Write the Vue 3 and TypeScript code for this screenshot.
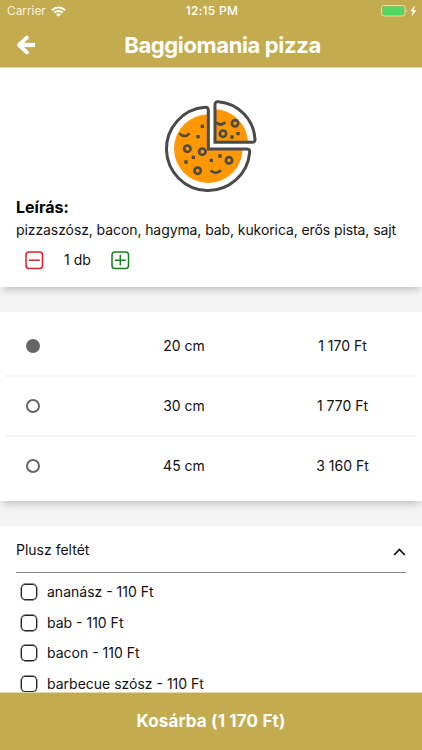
<script setup lang="ts">
import { computed, ref } from 'vue'

interface Size { label: string; price: string }

const sizes: Size[] = [
  { label: '20 cm', price: '1 170 Ft' },
  { label: '30 cm', price: '1 770 Ft' },
  { label: '45 cm', price: '3 160 Ft' },
]
const toppings = ['ananász - 110 Ft', 'bab - 110 Ft', 'bacon - 110 Ft', 'barbecue szósz - 110 Ft']
const selected = ref(0)
const quantity = ref(1)
const total = computed(() => {
  const value = Number(sizes[selected.value].price.replace(/\D/g, '')) * quantity.value
  return String(value).replace(/\B(?=(\d{3})+$)/g, ' ')
})
</script>

<template>
  <div class="screen">
    <header class="top">
      <div class="status">
        <div class="carrier">
          <span class="carrier-name">Carrier</span>
          <svg width="15" height="11" viewBox="0 0 15 11" fill="none" stroke="#fff" stroke-width="2.1">
            <path d="M1 4.2a9.2 9.2 0 0 1 13 0M3.3 6.8a5.9 5.9 0 0 1 8.4 0" />
            <path d="M7.5 10.8 5.1 8.5a3.4 3.4 0 0 1 4.8 0z" fill="#fff" stroke="none" />
          </svg>
        </div>
        <span class="time">12:15 PM</span>
        <div class="battery">
          <svg width="38" height="12" viewBox="0 0 38 12">
            <rect x=".5" y=".5" width="23.5" height="10.5" rx="2.4" fill="none" stroke="#e6d9a4" />
            <rect x="1.6" y="1.6" width="21.3" height="8.3" rx="1.2" fill="#4cd964" />
            <path d="M25.3 4v3.4c1.3-.5 1.3-2.9 0-3.4z" fill="#e6d9a4" />
            <path d="M33.8.6 29.3 6.3h2.5l-1.2 5 5-6.1h-2.8z" fill="#fff" />
          </svg>
        </div>
      </div>
      <div class="bar">
        <button class="back" aria-label="Vissza">
          <svg width="20" height="20" viewBox="0 0 20 20" fill="none" stroke="#fff" stroke-width="4.2" stroke-linejoin="round">
            <path d="M19 10H4" />
            <path d="M10.8 2.6 3.2 10l7.6 7.4" stroke-linecap="round" stroke-width="4" />
          </svg>
        </button>
        <h1>Baggiomania pizza</h1>
      </div>
    </header>

    <main class="content">
      <section class="card product">
        <svg class="pizza" width="112" height="110" viewBox="0 0 336 330" fill="none" stroke="#4b4a49" stroke-linecap="round">
          <g fill="#ff9800" stroke="none">
            <path d="M160 73A103 103 0 1 0 263 178H160z" />
            <path d="M180 58A102 102 0 0 1 279 157H180z" />
          </g>
          <g stroke-width="9">
            <path d="M160 61Q160 51 150 52A125 125 0 1 0 284 187Q285 177 275 177H160z" />
            <path d="M180 157V44Q180 34 190 35A120 120 0 0 1 300 147Q301 157 291 157z" />
          </g>
          <g stroke-width="8">
            <circle cx="97" cy="176" r="9.5" />
            <circle cx="142" cy="185" r="9.5" />
            <circle cx="128" cy="242" r="9.5" />
            <circle cx="222" cy="211" r="9.5" />
            <circle cx="204" cy="131" r="9.5" />
            <circle cx="240" cy="100" r="9.5" />
            <path stroke-linecap="butt" d="M73 130q16 16 31 0M167 241q15 15 31 0M182 97q15 13 29 0" />
          </g>
          <g fill="#4b4a49" stroke="none">
            <path d="M137 104h10v10h-10zM124 135h10v10h-10zM110 197h10v10h-10zM88 211h10v10H88zM164 206h10v10h-10zM190 193h10v10h-10zM226 136h10v10h-10zM244 126h10v10h-10z" />
          </g>
        </svg>
        <h2>Leírás:</h2>
        <p class="description">pizzaszósz, bacon, hagyma, bab, kukorica, erős pista, sajt</p>
        <div class="quantity">
          <button aria-label="Kevesebb" @click="quantity = Math.max(1, quantity - 1)">
            <svg width="19" height="19" viewBox="0 0 19 19" fill="none" stroke="#dc1f26" stroke-width="1.5">
              <rect x="1" y="1" width="16.5" height="16.5" rx="3" /><path d="M4 9.2h10.8" />
            </svg>
          </button>
          <span class="count">{{ quantity }} db</span>
          <button aria-label="Több" @click="quantity++">
            <svg width="19" height="19" viewBox="0 0 19 19" fill="none" stroke="#118518" stroke-width="1.5">
              <rect x="1" y="1" width="16.5" height="16.5" rx="3" /><path d="M4 9.2h10.8M9.3 3.8v10.8" />
            </svg>
          </button>
        </div>
      </section>

      <section class="card sizes">
        <div v-for="(size, i) in sizes" :key="size.label" class="size" @click="selected = i">
          <span class="radio" :class="{ on: selected === i }"></span>
          <span class="label">{{ size.label }}</span>
          <span class="price">{{ size.price }}</span>
        </div>
      </section>

      <section class="card extras">
        <div class="extras-head">
          <span>Plusz feltét</span>
          <svg width="14" height="10" viewBox="0 0 14 10" fill="none" stroke="#111" stroke-width="1.8">
            <path d="M2.2 8 7.5 2.5 12.8 8" />
          </svg>
        </div>
        <div v-for="topping in toppings" :key="topping" class="topping">
          <span class="check"></span>
          <span>{{ topping }}</span>
        </div>
      </section>
    </main>

    <button class="cart">Kosárba ({{ total }} Ft)</button>
  </div>
</template>

<style>
body { margin: 0; overflow: hidden; }
</style>

<style scoped>
.screen {
  width: 422px;
  height: 750px;
  display: flex;
  flex-direction: column;
  overflow: hidden;
  background: #f3f3f3;
  color: #111;
  font: 14px/20px Inter, "Liberation Sans", sans-serif;
}
button { border: 0; padding: 0; margin: 0; background: none; font: inherit; }
svg { display: block; flex: none; }
.top { flex: none; height: 68px; background: #c3ab50; color: #fff; border-bottom: 1px solid #e4d9b2; box-sizing: border-box; }
.status { display: grid; grid-template-columns: 1fr auto 1fr; height: 22px; align-items: center; font-size: 12px; line-height: 22px; }
.carrier { display: flex; align-items: center; gap: 5px; padding-left: 7px; letter-spacing: -.08px; color: #f7f2df; }
.time { font-weight: 500; letter-spacing: .25px; padding-left: 2px; }
.battery { display: flex; justify-content: flex-end; padding-right: 3px; }
.bar { display: grid; grid-template-columns: 52px 1fr 29px; align-items: center; height: 45px; }
.back { justify-self: start; margin-left: 16px; }
h1 { margin: 0; text-align: center; font-size: 22px; line-height: 30px; font-weight: 700; letter-spacing: -.37px; }
.content { flex: 1; min-height: 0; overflow: hidden; display: flex; flex-direction: column; gap: 25px; }
.card { flex: none; background: #fff; box-sizing: border-box; box-shadow: 0 6px 7px -3px rgba(0, 0, 0, .2); }
.product { height: 219px; padding: 22px 16px 0; }
.pizza { margin: 0 0 0 139px; }
h2 { margin: -3px 0 0; font-size: 16px; line-height: 20px; font-weight: 700; color: #000; }
.description { margin: 3px 0 0; white-space: nowrap; letter-spacing: -.09px; }
.quantity { display: flex; align-items: center; margin: 10px 0 0 9px; height: 20px; }
.count { width: 67px; text-align: center; }
.sizes { height: 189px; padding: 5px 6px 0; }
.size { display: grid; grid-template-columns: 103px 150px 1fr; align-items: center; height: 60px; box-sizing: border-box; border-bottom: 2px solid #f3f3f3; }
.size:last-child { border-bottom: 0; padding-bottom: 2px; }
.radio { width: 14px; height: 14px; box-sizing: border-box; border: 2px solid #666; border-radius: 50%; margin-left: 20px; }
.radio.on { background: #666; }
.label { text-align: center; }
.price { text-align: center; padding-left: 10px; }
.extras { padding: 0 16px; height: 220px; }
.extras-head { display: flex; justify-content: space-between; align-items: center; height: 47px; padding-top: 2px; border-bottom: 1px solid #888; margin-bottom: 4px; box-sizing: border-box; }
.extras-head svg { margin-top: 4px; }
.topping { display: flex; align-items: center; gap: 10px; height: 30.6px; padding-left: 5px; }
.check { flex: none; width: 16px; height: 16px; box-sizing: border-box; border: 1.5px solid #222; border-radius: 4px; box-shadow: 0 0 0 .4px #222; }
.cart { flex: none; height: 58px; background: #c3ab50; color: #fff; font-size: 17px; letter-spacing: .16px; line-height: 56px; padding-bottom: 1px; font-weight: 700; text-align: center; border-top: 1px solid #e4d9b2; }
</style>
